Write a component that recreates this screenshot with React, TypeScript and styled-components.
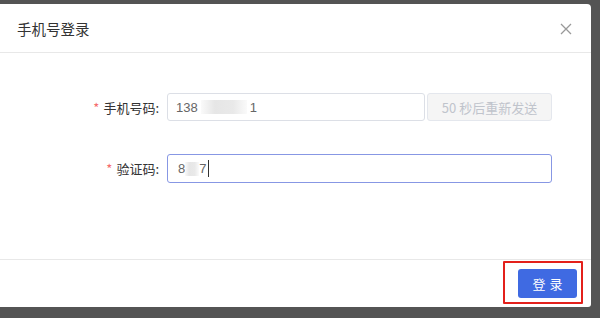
import React from "react";
import styled, { createGlobalStyle } from "styled-components";

const Global = createGlobalStyle`
  html, body { margin: 0; padding: 0; }
  body {
    background: #545454;
    font-family: "Noto Sans CJK SC", "Microsoft YaHei", sans-serif;
    width: 600px;
    height: 318px;
    overflow: hidden;
  }
`;

const Page = styled.div`
  width: 600px;
  height: 318px;
  padding-top: 4px;
  box-sizing: border-box;
`;

const Modal = styled.div`
  width: 591px;
  height: 303px;
  background: #fff;
  border-top-right-radius: 4px;
  border-bottom-right-radius: 3px;
  display: flex;
  flex-direction: column;
`;

const Header = styled.div`
  height: 48px;
  border-bottom: 1px solid #e8e8e8;
  display: flex;
  align-items: center;
  justify-content: space-between;
  padding: 0 18px 0 17px;
  flex-shrink: 0;
`;

const Title = styled.div`
  font-size: 14.5px;
  color: #333;
`;

const Close = styled.div`
  width: 14px;
  height: 14px;
  display: flex;
  align-items: center;
  justify-content: center;
  margin-top: 2px;
`;

const Body = styled.div`
  height: 206px;
  padding-top: 40px;
  box-sizing: border-box;
  display: flex;
  flex-direction: column;
  gap: 33px;
  flex-shrink: 0;
`;

const Row = styled.div`
  display: grid;
  grid-template-columns: 167px auto;
  align-items: center;
`;

const Label = styled.label`
  justify-self: end;
  padding-right: 8px;
  font-size: 13px;
  color: #333;
  display: flex;
  align-items: center;
`;

const Star = styled.span`
  color: #f56c6c;
  margin-right: 4px;
  font-size: 13px;
`;

const Controls = styled.div`
  display: flex;
  gap: 2px;
`;

const Input = styled.div<{ $w: number; $focus?: boolean }>`
  width: ${(p) => p.$w}px;
  height: ${(p) => (p.$focus ? 29 : 28)}px;
  box-sizing: border-box;
  border: 1px solid ${(p) => (p.$focus ? "#8797e4" : "#dcdfe6")};
  border-radius: 3px;
  padding-left: ${(p) => (p.$focus ? 10 : 8)}px;
  display: flex;
  align-items: center;
  font-family: "Liberation Sans", Arial, sans-serif;
  font-size: 13px;
  color: #666;
`;

const Blur = styled.span<{ $w: number }>`
  display: inline-block;
  width: ${(p) => p.$w}px;
  height: 14px;
  background: linear-gradient(90deg, #fafafa, #e6e6e6 30%, #e9e9e9 70%, #fafafa);
`;

const Gap = styled.span<{ $w: number }>`
  display: inline-block;
  width: ${(p) => p.$w}px;
`;

const Caret = styled.span`
  display: inline-block;
  width: 1px;
  height: 17px;
  background: #333;
  margin-left: 2px;
`;

const SendButton = styled.div`
  width: 125px;
  height: 28px;
  box-sizing: border-box;
  border: 1px solid #e4e7ed;
  border-radius: 3px;
  background: #f5f5f5;
  color: #c0c4cc;
  font-size: 13px;
  display: flex;
  align-items: center;
  justify-content: center;
`;

const Footer = styled.div`
  flex: 1;
  border-top: 1px solid #e8e8e8;
  display: flex;
  justify-content: flex-end;
  align-items: flex-start;
  padding: 9px 14px 0 0;
`;

const ButtonWrap = styled.div`
  position: relative;
`;

const Highlight = styled.div`
  position: absolute;
  left: -15px;
  top: -8px;
  right: -6px;
  bottom: -6px;
  border: 2px solid #e3201b;
  border-radius: 1px;
  pointer-events: none;
`;

const Primary = styled.button`
  width: 59px;
  height: 29px;
  border: none;
  border-radius: 3px;
  background: #3f6ae2;
  color: #fff;
  font-family: "Noto Sans CJK SC", sans-serif;
  font-size: 13px;
  letter-spacing: 4px;
  padding: 0 0 0 4px;
  display: flex;
  align-items: center;
  justify-content: center;
`;

export default function App() {
  return (
    <>
      <Global />
      <Page>
        <Modal>
          <Header>
            <Title>手机号登录</Title>
            <Close>
              <svg width="12" height="12" viewBox="0 0 12 12">
                <path d="M1 1 L11 11 M11 1 L1 11" stroke="#999" strokeWidth="1.3" />
              </svg>
            </Close>
          </Header>
          <Body>
            <Row>
              <Label>
                <Star>*</Star>手机号码:
              </Label>
              <Controls>
                <Input $w={258}>
                  138
                  <Gap $w={3} />
                  <Blur $w={46} />
                  <Gap $w={3} />1
                </Input>
                <SendButton>50 秒后重新发送</SendButton>
              </Controls>
            </Row>
            <Row>
              <Label>
                <Star>*</Star>验证码:
              </Label>
              <Input $w={385} $focus>
                8<Blur $w={14} />7<Caret />
              </Input>
            </Row>
          </Body>
          <Footer>
            <ButtonWrap>
              <Primary>登录</Primary>
              <Highlight />
            </ButtonWrap>
          </Footer>
        </Modal>
      </Page>
    </>
  );
}
